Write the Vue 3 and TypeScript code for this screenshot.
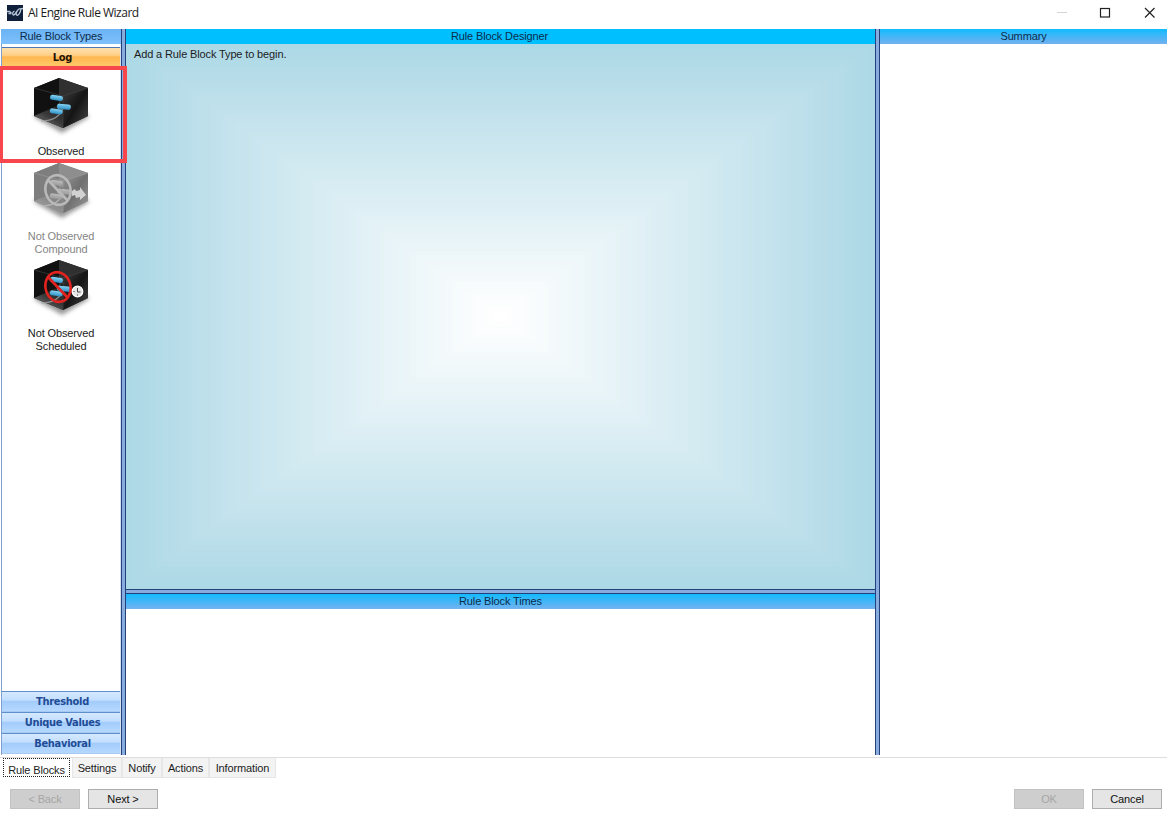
<script setup lang="ts">
interface Band {
  x: number
  y: number
  w: number
  h: number
  fill: string
}

interface BlockType {
  id: string
  lines: string[]
  disabled: boolean
}

const STEPS = 62
const WIDTH = 749
const HEIGHT = 545

/* Nested rectangles fading from light blue at the edge to white in the middle */
const bands: Band[] = Array.from({ length: STEPS }, (_, i) => {
  const t = i / (STEPS - 1)
  const mix = (from: number) => Math.round(from + (255 - from) * t)
  return {
    x: (WIDTH / 2) * (i / STEPS),
    y: (HEIGHT / 2) * (i / STEPS),
    w: WIDTH * (1 - i / STEPS),
    h: HEIGHT * (1 - i / STEPS),
    fill: `rgb(${mix(173)}, ${mix(216)}, ${mix(230)})`,
  }
})

const blockTypes: BlockType[] = [
  { id: 'observed', lines: ['Observed'], disabled: false },
  { id: 'compound', lines: ['Not Observed', 'Compound'], disabled: true },
  { id: 'scheduled', lines: ['Not Observed', 'Scheduled'], disabled: false },
]

const groups: string[] = ['Threshold', 'Unique Values', 'Behavioral']
const tabs: string[] = ['Settings', 'Notify', 'Actions', 'Information']
</script>

<template>
  <div class="window">
    <header class="titlebar">
      <svg class="logo" width="16" height="16" viewBox="0 0 16 16">
        <rect width="16" height="16" fill="#10203c" />
        <path d="M0 6.500h2.500l2 1.500M1.500 8.500h3M7.500 6.500C5.500 6 5 10 6.800 10c1.500 0 2-3 3.800-4.600M10.500 5.500c-2 2-1.500 5.500.3 4.700 2-1 3.800-6 2.200-6.300-1-.1-2.200 1-2.500 1.600M13 4l3-.5" fill="none" stroke="#b9c8d8" stroke-width="1.300" />
      </svg>
      <span class="title">AI Engine Rule Wizard</span>
      <svg class="controls" width="110" height="26" viewBox="0 0 110 26">
        <path d="M0 12.500h10" stroke="#d4d4d4" />
        <rect x="43.500" y="8.500" width="9" height="8.500" fill="none" stroke="#222" stroke-width="1.200" />
        <path d="M88 8l9.500 9.500M97.500 8l-9.500 9.500" stroke="#222" stroke-width="1.200" />
      </svg>
    </header>

    <main class="body">
      <aside class="types">
        <div class="head head-types"><span>Rule Block Types</span></div>
        <div class="types-inner">
          <div class="group active"><span>Log</span></div>
          <div class="items">
            <div v-for="b in blockTypes" :key="b.id" class="item" :class="[b.id, { disabled: b.disabled }]">
              <svg class="cube" width="64" height="64" viewBox="0 0 64 64">
                <defs>
                  <linearGradient :id="b.id + '-r'" x1="0" y1="0" x2="1" y2="1">
                    <stop offset="0" :stop-color="b.disabled ? '#929292' : '#3b3b3b'" />
                    <stop offset=".5" :stop-color="b.disabled ? '#707070' : '#151515'" />
                    <stop offset="1" :stop-color="b.disabled ? '#a0a0a0' : '#4c4c4c'" />
                  </linearGradient>
                  <linearGradient :id="b.id + '-f'" x1="0" y1="1" x2="1" y2="0">
                    <stop offset="0" :stop-color="b.disabled ? '#b0b0b0' : '#858585'" />
                    <stop offset=".45" :stop-color="b.disabled ? '#8b8b8b' : '#393939'" />
                    <stop offset="1" :stop-color="b.disabled ? '#747474' : '#151515'" />
                  </linearGradient>
                  <linearGradient :id="b.id + '-p'" x1="0" y1="0" x2="0" y2="1">
                    <stop offset="0" :stop-color="b.disabled ? '#bcbcbc' : '#86d3f3'" />
                    <stop offset="1" :stop-color="b.disabled ? '#999' : '#2d8fc3'" />
                  </linearGradient>
                  <filter :id="b.id + '-s'" x="-30%" y="-50%" width="160%" height="200%">
                    <feGaussianBlur stdDeviation="2" />
                  </filter>
                </defs>
                <path d="M5 42L33 58 60 42 56 37 8 37z" fill="#555" opacity=".6" :filter="`url(#${b.id}-s)`" />
                <path d="M5 13L30 3 59 13v28L34 53 5 41z" :fill="b.disabled ? '#757575' : '#171717'" />
                <path d="M5 13L30 3v27L5 41z" :fill="b.disabled ? '#7e7e7e' : '#111'" />
                <path d="M30 3L59 13 48 20 30 29z" :fill="b.disabled ? '#8e8e8e' : '#303030'" />
                <path d="M5 41L30 30 44 35 34 53z" :fill="`url(#${b.id}-f)`" />
                <path d="M34 21L59 13v28L34 53z" :fill="`url(#${b.id}-r)`" opacity=".88" />
                <path d="M5 13L34 21 59 13M34 21v32" fill="none" :stroke="b.disabled ? '#a0a0a0' : '#454545'" stroke-width=".6" />
                <path d="M12 46C23 46 31 42 34 33" fill="none" :stroke="b.disabled ? '#c0c0c0' : '#a5a5a5'" stroke-width="1.200" opacity=".8" />
                <g :fill="`url(#${b.id}-p)`">
                  <rect x="21" y="20.500" width="13" height="5" rx="2.500" transform="rotate(9 28 23)" />
                  <rect x="28" y="29" width="14" height="5.500" rx="2.700" transform="rotate(5 35 31)" />
                  <rect x="21" y="34" width="13" height="5" rx="2.500" transform="rotate(8 28 35)" />
                </g>
                <g v-if="b.id !== 'observed'" fill="none" :stroke="b.disabled ? '#b9b9b9' : '#e2231f'" stroke-width="2.600">
                  <ellipse cx="29" cy="30" rx="12.500" ry="15" transform="rotate(-14 29 30)" />
                  <path d="M19 20L39 41" />
                </g>
                <path v-if="b.id === 'compound'" d="M43 31l3-2 1 2 4-1v-3l6 8-6 5v-3l-4 1-1-3-3 1z" fill="#d2d2d2" />
                <g v-if="b.id === 'scheduled'">
                  <circle cx="48.500" cy="34.500" r="5.300" fill="#e6e6e6" stroke="#fff" stroke-width="1.200" />
                  <path d="M48.500 31v4h3M44.500 34.500h1M48.500 38.500v-1" fill="none" stroke="#444" />
                </g>
              </svg>
              <div v-for="line in b.lines" :key="line" class="caption">{{ line }}</div>
            </div>
            <div class="highlight"></div>
          </div>
          <div v-for="g in groups" :key="g" class="group"><span>{{ g }}</span></div>
        </div>
      </aside>

      <div class="split-v"></div>

      <section class="center">
        <div class="head head-designer"><span>Rule Block Designer</span></div>
        <div class="canvas">
          <svg class="gradient" :viewBox="`0 0 ${WIDTH} ${HEIGHT}`" preserveAspectRatio="none">
            <rect v-for="(r, i) in bands" :key="i" :x="r.x" :y="r.y" :width="r.w" :height="r.h" :fill="r.fill" />
          </svg>
          <span class="hint">Add a Rule Block Type to begin.</span>
        </div>
        <div class="split-h"></div>
        <div class="head"><span>Rule Block Times</span></div>
        <div class="times"></div>
      </section>

      <div class="split-v"></div>

      <section class="summary">
        <div class="head"><span>Summary</span></div>
      </section>
    </main>

    <nav class="tabs">
      <div class="tab current"><span>Rule Blocks</span></div>
      <div v-for="t in tabs" :key="t" class="tab" :class="t.toLowerCase()"><span>{{ t }}</span></div>
    </nav>

    <footer class="footer">
      <button class="btn off">&lt; Back</button>
      <button class="btn">Next &gt;</button>
      <div class="spacer"></div>
      <button class="btn off">OK</button>
      <button class="btn">Cancel</button>
    </footer>
  </div>
</template>

<style>
body {
  margin: 0;
  background: #fff;
}
</style>

<style scoped>
* {
  box-sizing: border-box;
}
.window {
  width: 1167px;
  height: 815px;
  display: flex;
  flex-direction: column;
  overflow: hidden;
  background: #fff;
  color: #1c1c1c;
  font-family: "Liberation Sans", Arial, sans-serif;
  font-size: 11px;
  letter-spacing: -0.13px;
}
.titlebar {
  height: 29px;
  flex: none;
  display: flex;
  align-items: flex-start;
  padding: 0 0 0 7px;
}
.logo {
  margin-top: 5px;
}
.title {
  margin: 5px auto 0 5px;
  font: 12px/16px "Open Sans", "Noto Sans", sans-serif;
  letter-spacing: -0.5px;
}
.body {
  height: 726px;
  flex: none;
  display: flex;
}
.types {
  width: 121px;
  display: flex;
  flex-direction: column;
}
.head {
  height: 15px;
  flex: none;
  text-align: center;
  line-height: 15px;
  color: #0c2c4c;
  background: linear-gradient(#12bbff, #74b1ef);
}
.head-types {
  margin-left: 1px;
  background: linear-gradient(#6bb3f5, #7ec0fb);
}
.head-designer {
  padding-right: 2px;
  background: #00bfff;
}
.types-inner {
  flex: 1;
  display: flex;
  flex-direction: column;
  margin-left: 1px;
  padding: 3px 0 1px;
  border-left: 1px solid #7e9fd0;
  border-right: 1px solid #d5e0f0;
}
.group {
  height: 21px;
  flex: none;
  padding-left: 3px;
  border-top: 1px solid #5f8fca;
  border-bottom: 1px solid #a6c9f3;
  background: linear-gradient(#d5e9ff 0%, #c3deff 42%, #a3ccfb 50%, #b6d8ff 100%);
  color: #1f4c96;
  font: bold 11px/19px "DejaVu Sans Condensed", "DejaVu Sans", sans-serif;
  font-stretch: condensed;
  text-align: center;
  letter-spacing: -0.3px;
}
.group.active {
  height: 20px;
  border-top-color: #4c78b8;
  background: linear-gradient(#ffe1ac 0%, #ffd08a 40%, #ffb750 50%, #ffc969 100%);
  color: #1d1305;
  line-height: 20px;
}
.items {
  position: relative;
  flex: 1;
  padding-top: 8px;
}
.item {
  display: flex;
  flex-direction: column;
  align-items: center;
  height: 97px;
}
.item.observed {
  height: 85px;
}
.cube {
  display: block;
  margin: 0 0 6px;
  flex: none;
}
.caption {
  line-height: 12.500px;
}
.disabled .caption {
  color: #858585;
}
.highlight {
  position: absolute;
  left: -3px;
  top: -1px;
  width: 128px;
  height: 97px;
  border: 4px solid #f8474c;
  z-index: 2;
}
.split-v {
  width: 5px;
  flex: none;
  border-left: 1px solid #23427b;
  border-right: 1px solid #23427b;
  background: #88acde;
}
.center {
  width: 749px;
  display: flex;
  flex-direction: column;
}
.canvas {
  position: relative;
  height: 545px;
  flex: none;
  padding: 4px 8px;
}
.gradient {
  position: absolute;
  inset: 0;
  width: 100%;
  height: 100%;
}
.hint {
  position: relative;
  display: block;
  line-height: 13px;
}
.split-h {
  height: 5px;
  flex: none;
  border-top: 1px solid #23427b;
  border-bottom: 1px solid #23427b;
  background: #88acde;
}
.summary {
  flex: 1;
}
.tabs {
  height: 24px;
  flex: none;
  display: flex;
  align-items: flex-start;
  margin-top: 2px;
  padding-left: 2px;
  border-top: 1px solid #dedede;
}
.tab {
  height: 20px;
  border: 1px solid #e6e6e6;
  border-top: 0;
  background: #f3f3f3;
  text-align: center;
  line-height: 21px;
  white-space: nowrap;
}
.tab.current {
  width: 67px;
  margin: 0 2px 0 1px;
  height: 19px;
  border: 1px dotted #222;
  background: #fff;
  line-height: 22px;
}
.settings {
  width: 50px;
}
.notify {
  width: 40px;
}
.actions {
  width: 47px;
}
.information {
  width: 67px;
}
.footer {
  display: flex;
  padding: 8px 5px 0 10px;
}
.btn {
  width: 70px;
  height: 20px;
  margin: 0 8px 0 0;
  padding: 0;
  border: 1px solid #adadad;
  border-radius: 0;
  background: #e5e5e5;
  color: #111;
  font: inherit;
  line-height: 18px;
  letter-spacing: -0.13px;
}
.btn:last-child {
  margin-right: 0;
}
.btn.off {
  border-color: #c2c2c2;
  background: #cecece;
  color: #a6a6a6;
}
.spacer {
  flex: 1;
}
</style>
